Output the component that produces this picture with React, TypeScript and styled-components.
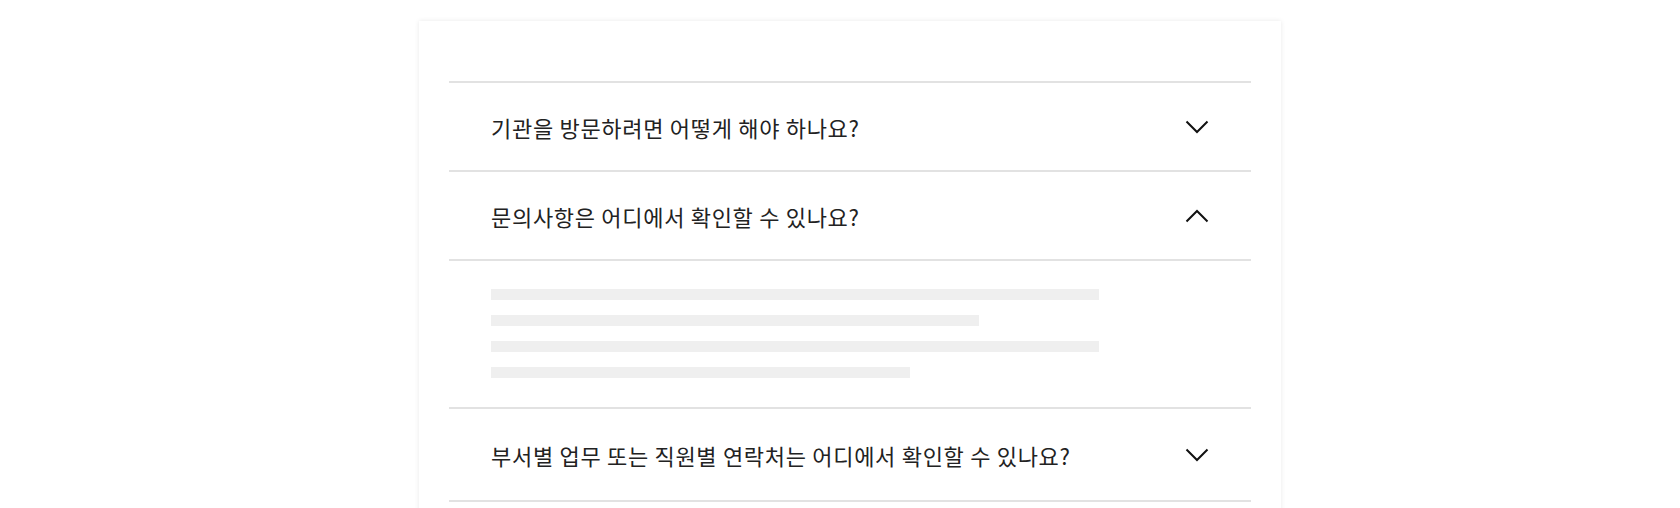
import React, { useState } from "react";
import styled, { createGlobalStyle } from "styled-components";

const Global = createGlobalStyle`
  html, body { margin: 0; padding: 0; background: #ffffff; }
  body { font-family: "Noto Sans CJK KR", "Noto Sans", sans-serif; }
`;

const Page = styled.div`
  padding: 21px 0 0 419px;
  height: 508px;
  box-sizing: border-box;
  overflow: hidden;
`;

const Card = styled.section`
  width: 862px;
  box-sizing: border-box;
  background: #fff;
  padding: 60px 30px 40px;
  box-shadow: 0 0 5px rgba(0, 0, 0, 0.09);
`;

const List = styled.div`
  border-top: 2px solid #e2e2e2;
`;

const Item = styled.div`
  border-bottom: 2px solid #e2e2e2;
`;

const Header = styled.button<{ $h: number }>`
  all: unset;
  box-sizing: border-box;
  display: flex;
  align-items: center;
  justify-content: space-between;
  width: 100%;
  height: ${(p) => p.$h}px;
  padding: 0 42px 0 42px;
  cursor: pointer;
  font-family: "Noto Sans CJK KR", "Noto Sans", sans-serif;
  font-size: 22px;
  color: #222;
  letter-spacing: 0.7px;
`;

const Chevron = styled.svg`
  width: 24px;
  height: 14px;
  flex: none;
`;

const Body = styled.div`
  border-top: 2px solid #e2e2e2;
  padding: 28px 42px 29px;
  display: flex;
  flex-direction: column;
  gap: 15px;
`;

const Bar = styled.div<{ $w: number }>`
  height: 11px;
  width: ${(p) => p.$w}px;
  background: #efefef;
`;

const items = [
  { q: "기관을 방문하려면 어떻게 해야 하나요?", h: 87 },
  { q: "문의사항은 어디에서 확인할 수 있나요?", h: 87 },
  { q: "부서별 업무 또는 직원별 연락처는 어디에서 확인할 수 있나요?", h: 91 },
];

export default function App() {
  const [open, setOpen] = useState<number>(1);
  return (
    <>
      <Global />
      <Page>
        <Card>
          <List>
            {items.map((it, i) => (
              <Item key={i}>
                <Header $h={it.h} onClick={() => setOpen(open === i ? -1 : i)}>
                  <span>{it.q}</span>
                  <Chevron viewBox="0 0 24 14" fill="none">
                    <path
                      d={open === i ? "M1.5 12.5 L12 2 L22.5 12.5" : "M1.5 1.5 L12 12 L22.5 1.5"}
                      stroke="#111"
                      strokeWidth="2"
                    />
                  </Chevron>
                </Header>
                {open === i && (
                  <Body>
                    <Bar $w={608} />
                    <Bar $w={488} />
                    <Bar $w={608} />
                    <Bar $w={419} />
                  </Body>
                )}
              </Item>
            ))}
          </List>
        </Card>
      </Page>
    </>
  );
}
